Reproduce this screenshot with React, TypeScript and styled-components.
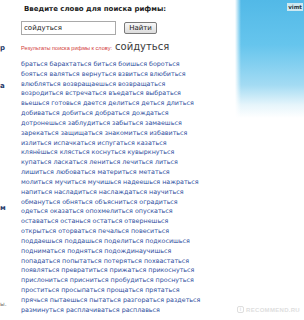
import React, {FC} from 'react'
import styled, {createGlobalStyle} from 'styled-components'

const GlobalStyle = createGlobalStyle`
  html, body {
    margin: 0;
    padding: 0;
    background: #fff;
  }
  body {
    font-family: 'DejaVu Sans', Verdana, sans-serif;
  }
`

const Page = styled.div`
  position: relative;
  display: flex;
  width: 304px;
  height: 320px;
  overflow: hidden;
  background: #fff;
`

const Side = styled.div`
  width: 21px;
  flex: none;
  overflow: hidden;
`

const Fragment = styled.div<{$gap: number; $muted?: boolean}>`
  margin-top: ${p => p.$gap}px;
  height: 10px;
  line-height: 10px;
  font-size: ${p => (p.$muted ? 6 : 7)}px;
  font-weight: ${p => (p.$muted ? 'normal' : 'bold')};
  color: ${p => (p.$muted ? '#777' : '#1f3a6a')};
  white-space: nowrap;
`

const Main = styled.div`
  flex: 1;
  display: flex;
  flex-direction: column;
  min-width: 0;
`

const Heading = styled.h1`
  margin: 4px 0 0 3px;
  height: 10px;
  line-height: 10px;
  font-size: 7px;
  font-weight: bold;
  color: #1c1c1c;
  white-space: nowrap;
`

const Form = styled.div`
  display: flex;
  align-items: center;
  gap: 8px;
  margin-top: 7px;
  height: 14px;
`

const Field = styled.div`
  box-sizing: border-box;
  width: 95px;
  height: 14px;
  border: 1px solid #a9a9a9;
  padding-left: 2px;
  font-size: 7px;
  line-height: 12px;
  color: #222;
`

const Button = styled.div`
  box-sizing: border-box;
  width: 33px;
  height: 12px;
  border: 1px solid #7a7a7a;
  border-radius: 2px;
  background: linear-gradient(#f8f8f8, #dcdcdc);
  font-size: 7px;
  line-height: 10px;
  text-align: center;
  color: #222;
`

const Result = styled.div`
  display: flex;
  align-items: baseline;
  gap: 3px;
  margin-top: 6px;
  height: 13px;
  white-space: nowrap;
`

const ResultLabel = styled.span`
  font-family: 'Liberation Sans', Arial, sans-serif;
  font-size: 5.6px;
  color: #d23b3b;
`

const ResultWord = styled.span`
  font-size: 10px;
  color: #3a3a3a;
`

const Words = styled.div`
  margin-top: 5px;
  display: flex;
  flex-direction: column;
`

const Line = styled.div`
  height: 9.84px;
  line-height: 9.84px;
  font-size: 6.35px;
  white-space: nowrap;
`

const Word = styled.a`
  color: #2f4f9e;
  text-decoration: none;
`

const Banner = styled.div`
  width: 69px;
  height: 118px;
  flex: none;
  display: flex;
  justify-content: flex-end;
  align-items: flex-start;
  background:
    linear-gradient(to right, #fff 0, rgba(255, 255, 255, 0) 6px),
    linear-gradient(to bottom, #52b9e7 0, #66c5ed 45px, #a3dbf3 85px, #e6f5fb 105px, #fff 118px);
`

const Badge = styled.span`
  margin: 3px 1px 0 0;
  padding: 0 1px;
  height: 8px;
  line-height: 8px;
  font-size: 5.5px;
  font-weight: bold;
  color: #2a3a44;
  background: #cde9f2;
`

const Watermark = styled.div`
  position: absolute;
  right: 4px;
  bottom: 7px;
  display: flex;
  align-items: center;
  gap: 2px;
  font-family: 'Liberation Sans', Arial, sans-serif;
  font-size: 6px;
  font-weight: bold;
  letter-spacing: 0.3px;
  color: #dedede;
`

const WatermarkMark = styled.span`
  box-sizing: border-box;
  width: 7px;
  height: 7px;
  border: 1px solid #dedede;
  border-radius: 2px;
  font-size: 5px;
  line-height: 5px;
  text-align: center;
`

const LINES = [
  'браться барахтаться биться боишься бороться',
  'бояться валяться вернуться взвиться влюбиться',
  'влюбляться возвращаешься возвращаться',
  'возродиться встречаться въедаться выбраться',
  'вьешься готовься дается делиться деться длиться',
  'добиваться добиться добраться дождаться',
  'дотронешься заблудиться забыться замаешься',
  'зарекаться защищаться знакомиться избавиться',
  'излиться испачкаться испугаться казаться',
  'клянёшься клясться коснуться кувыркнуться',
  'купаться ласкаться лениться лечиться литься',
  'лишиться любоваться материться метаться',
  'молиться мучиться мучишься надеешься нажраться',
  'напиться насладиться наслаждаться научиться',
  'обмануться обняться объясниться оградиться',
  'одеться оказаться опохмелиться опускаться',
  'оставаться останься остаться отвернешься',
  'открыться оторваться печалься повеситься',
  'поддаешься поддашься поделиться подкосишься',
  'подниматься подняться подождинаучишься',
  'попадаться попытаться потеряться похвастаться',
  'появляться превратиться прижаться прикоснуться',
  'прислониться присниться пробудиться проснуться',
  'проститься просыпаться прощаться прятаться',
  'прячься пытаешься пытаться разгораться раздеться',
  'разминуться расплачиваться расплавься',
]

const App: FC = () => {
  return (
    <>
      <GlobalStyle/>
      <Page>
        <Side>
          <Fragment $gap={43}>р</Fragment>
          <Fragment $gap={28}>а</Fragment>
          <Fragment $gap={112}>м</Fragment>
          <Fragment $gap={86} $muted>ы.</Fragment>
        </Side>
        <Main>
          <Heading>Введите слово для поиска рифмы:</Heading>
          <Form>
            <Field>сойдуться</Field>
            <Button>Найти</Button>
          </Form>
          <Result>
            <ResultLabel>Результаты поиска рифмы к слову:</ResultLabel>
            <ResultWord>сойдуться</ResultWord>
          </Result>
          <Words>
            {LINES.map(line => (
              <Line key={line}>
                {line.split(' ').map((w, i) => (
                  <React.Fragment key={w}>
                    {i > 0 && ' '}
                    <Word href='#'>{w}</Word>
                  </React.Fragment>
                ))}
              </Line>
            ))}
          </Words>
        </Main>
        <Banner>
          <Badge>vimt</Badge>
        </Banner>
        <Watermark>
          <WatermarkMark>i</WatermarkMark>
          RECOMMEND.RU
        </Watermark>
      </Page>
    </>
  )
}

export default App
